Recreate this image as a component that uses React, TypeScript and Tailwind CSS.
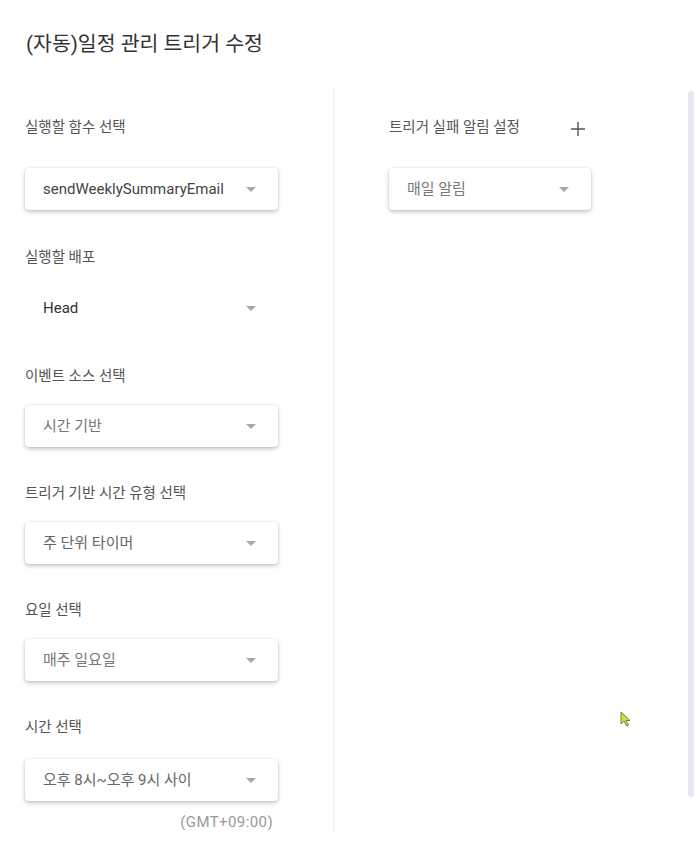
import React from "react";

const font = { fontFamily: 'Roboto, "Noto Sans CJK KR", sans-serif' };

function Arrow() {
  return (
    <svg width="10" height="5" viewBox="0 0 10 5" className="shrink-0">
      <path d="M0 0 L10 0 L5 5 Z" fill="#a8a8a8" />
    </svg>
  );
}

function Select({
  value,
  color = "text-[#444]",
  flat = false,
  width = "w-[253px]",
  mt = "mt-[18px]",
}: {
  value: string;
  color?: string;
  flat?: boolean;
  width?: string;
  mt?: string;
}) {
  return (
    <div
      className={`${mt} ${width} h-[42px] rounded-[4px] bg-white flex items-center justify-between pl-[18px] pr-[22px] ${
        flat ? "" : "shadow-[0_2px_4px_rgba(0,0,0,0.22),0_0_2px_rgba(0,0,0,0.12)]"
      }`}
    >
      <span className={`text-[15px] ${color} leading-none`}>{value}</span>
      <Arrow />
    </div>
  );
}

function Label({ text, mt = "mt-[37px]" }: { text: string; mt?: string }) {
  return <div className={`${mt} h-[20px] leading-[20px] text-[14.5px] text-[#555]`}>{text}</div>;
}

export default function App() {
  return (
    <div className="relative w-[696px] h-[852px] bg-white overflow-hidden" style={font}>
      <div className="pl-[26px] pt-[31px] h-[26px] box-content leading-[26px] text-[20.5px] text-[#333]">
        (자동)일정 관리 트리거 수정
      </div>
      <div className="mt-[31px] flex items-start">
        <div className="w-[333px] pl-[25px] pt-[30px]">
          <Label text="실행할 함수 선택" mt="mt-0" />
          <Select value="sendWeeklySummaryEmail" mt="mt-[30px]" />
          <Label text="실행할 배포" mt="mt-[38px]" />
          <Select value="Head" flat color="text-[#333]" mt="mt-[19px]" />
          <Label text="이벤트 소스 선택" mt="mt-[38px]" />
          <Select value="시간 기반" color="text-[#777]" />
          <Label text="트리거 기반 시간 유형 선택" />
          <Select value="주 단위 타이머" color="text-[#666]" />
          <Label text="요일 선택" />
          <Select value="매주 일요일" color="text-[#777]" />
          <Label text="시간 선택" />
          <Select value="오후 8시~오후 9시 사이" color="text-[#666]" mt="mt-[21px]" />
          <div className="w-[248px] text-right mt-[11px] text-[15px] tracking-[0.4px] text-[#999] leading-[20px]">
            (GMT+09:00)
          </div>
        </div>
        <div className="w-[2px] h-[745px] bg-[#f4f4f4]" />
        <div className="pl-[54px] pt-[30px]">
          <div className="w-[202px] flex items-center justify-between h-[20px]">
            <span className="text-[14.5px] text-[#555] leading-[20px]">트리거 실패 알림 설정</span>
            <svg width="14" height="14" viewBox="0 0 14 14" className="mr-[6px] mt-[2px]">
              <path d="M7 0 V14 M0 7 H14" stroke="#555" strokeWidth="1.4" />
            </svg>
          </div>
          <Select value="매일 알림" color="text-[#777]" width="w-[202px]" mt="mt-[30px]" />
        </div>
      </div>
      <div className="absolute left-[688px] top-[91px] w-[6px] h-[706px] rounded-full bg-[#e6e6ee]" />
      <svg className="absolute left-[620px] top-[711px]" width="14" height="18" viewBox="0 0 14 18">
        <path d="M1 1 L1 13 L4 10 L6.5 15 L8.5 14 L6 9.5 L10 9.5 Z" fill="#cde23a" stroke="#7a7a50" strokeWidth="1" strokeLinejoin="round" />
      </svg>
    </div>
  );
}
